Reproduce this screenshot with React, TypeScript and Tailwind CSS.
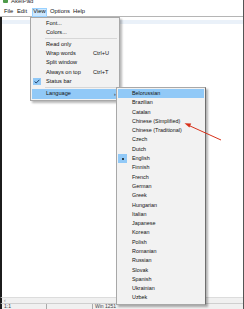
import React from 'react';

const viewItems: Array<{ label?: string; shortcut?: string; checked?: boolean; sep?: boolean }> = [
  { label: 'Font...' },
  { label: 'Colors...' },
  { sep: true },
  { label: 'Read only' },
  { label: 'Wrap words', shortcut: 'Ctrl+U' },
  { label: 'Split window' },
  { label: 'Always on top', shortcut: 'Ctrl+T' },
  { label: 'Status bar', checked: true },
  { sep: true },
];

const languages = [
  'Belorussian', 'Brazilian', 'Catalan', 'Chinese (Simplified)', 'Chinese (Traditional)',
  'Czech', 'Dutch', 'English', 'Finnish', 'French', 'German', 'Greek', 'Hungarian',
  'Italian', 'Japanese', 'Korean', 'Polish', 'Romanian', 'Russian', 'Slovak',
  'Spanish', 'Ukrainian', 'Uzbek',
];

export default function App() {
  return (
    <div className="relative w-[244px] h-[309px] overflow-hidden bg-white flex flex-col font-['Liberation_Sans',sans-serif] text-[#111] border-r border-[#555]">
      {/* title bar, cut at the top */}
      <div className="h-[7px] overflow-hidden shrink-0">
        <div className="mt-[-4px] h-[9px] flex items-center gap-[3px] pl-[3px]">
          <div className="w-[5px] h-[5px] rounded-[1px] bg-[#4f9a4a]" />
          <span className="text-[6px] leading-none text-[#333]">AkelPad</span>
        </div>
      </div>

      {/* menu bar */}
      <div className="h-[10px] shrink-0 flex items-center text-[5.8px] leading-none border-b border-[#b5b5b5]">
        <span className="w-[13px] pl-[4px] box-content">File</span>
        <span className="w-[15px]">Edit</span>
        <span className="w-[15px] h-[9px] mt-[1px] flex items-center justify-center bg-[#cce8ff] border border-[#99d1ff]">View</span>
        <span className="w-[26px] pl-[3px]">Options</span>
        <span>Help</span>
      </div>

      {/* editor */}
      <div className="flex-1 flex flex-col border-l-2 border-[#1c1c1c]">
        <div className="h-[3px]" />
        <div className="h-[4px] bg-[#eaf1f9]" />
        <div className="flex-1" />
      </div>

      {/* horizontal scrollbar */}
      <div className="h-[6px] shrink-0 flex items-center bg-[#f0f0f0] border-t border-[#dcdcdc] border-l-2 border-l-[#1c1c1c] text-[5px] leading-none text-[#777] pl-[2px]">
        ‹
      </div>

      {/* status bar */}
      <div className="h-[6px] shrink-0 flex items-start bg-[#f0f0f0] border-t border-[#cfcfcf] border-l-2 border-l-[#1c1c1c] text-[5px] leading-none text-[#444] overflow-hidden">
        <span className="w-[45px] pl-[2px] border-r border-[#aaa] h-full">1:1</span>
        <span className="w-[46px] border-r border-[#aaa] h-full" />
        <span className="pl-[2px]">Win 1251</span>
      </div>

      {/* View menu */}
      <div className="absolute left-[30px] top-[17px] w-[90px] bg-[#f2f2f2] border border-[#a8a8a8] shadow-[2px_2px_2px_rgba(0,0,0,0.28)] py-[1px] text-[5.6px] leading-none">
        {viewItems.map((it, i) =>
          it.sep ? (
            <div key={i} className="h-[2.5px] flex items-center pl-[14px] pr-[2px]">
              <div className="h-px w-full bg-[#d7d7d7]" />
            </div>
          ) : (
            <div key={i} className="h-[9.25px] flex items-center relative">
              <div className="w-[15px] flex justify-center">
                {it.checked && (
                  <div className="w-[8px] h-[7.5px] bg-[#91c9f7] flex items-center justify-center ml-[-4px]">
                    <svg width="6" height="5" viewBox="0 0 6 5">
                      <path d="M0.6 2.6 L2.2 4 L5.4 0.8" fill="none" stroke="#1f3f66" strokeWidth="1" />
                    </svg>
                  </div>
                )}
              </div>
              <span className="w-[47px]">{it.label}</span>
              {it.shortcut && <span>{it.shortcut}</span>}
            </div>
          )
        )}
        <div className="h-[10.5px] mx-[1px] flex items-center bg-[#91c9f7]">
          <span className="pl-[14px] w-[82px]">Language</span>
          <span className="text-[5px]">›</span>
        </div>
      </div>

      {/* Language submenu */}
      <div className="absolute left-[116px] top-[87px] w-[90px] bg-[#f2f2f2] border border-[#a8a8a8] border-r-[#6e6e6e] shadow-[2px_2px_2px_rgba(0,0,0,0.3)] py-[1px] text-[5.4px] leading-none">
        {languages.map((lang, i) => (
          <div
            key={lang}
            className={`h-[9.3px] flex items-center mx-[1px] ${i === 0 ? 'bg-[#91c9f7]' : ''}`}
          >
            <div className="w-[14px] h-full flex items-center">
              {lang === 'English' && (
                <div className="w-[9px] h-[9px] bg-[#91c9f7] flex items-center justify-center">
                  <div className="w-[2px] h-[2px] rounded-full bg-[#111]" />
                </div>
              )}
            </div>
            <span>{lang}</span>
          </div>
        ))}
      </div>

      {/* red arrow annotation */}
      <svg className="absolute left-[180px] top-[118px]" width="46" height="26" viewBox="0 0 46 26">
        <line x1="9" y1="7.5" x2="41" y2="22" stroke="#d8321b" strokeWidth="1" />
        <path d="M4.5 5.3 L11.2 5.6 L9.4 9.6 Z" fill="#d8321b" />
      </svg>
    </div>
  );
}
